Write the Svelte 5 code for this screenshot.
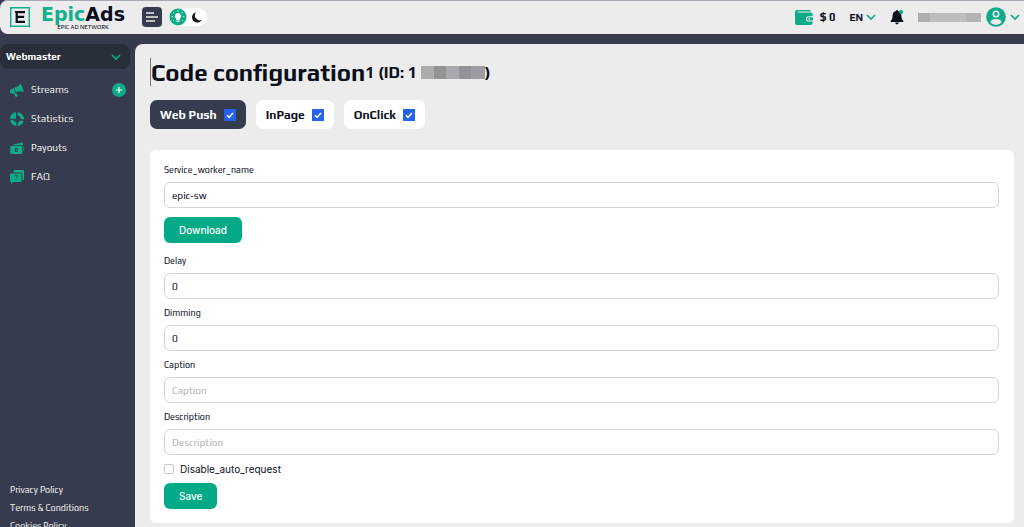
<script lang="ts">
  let sections = $state([
    { id: 'push', title: 'Web Push', enabled: true },
    { id: 'inpage', title: 'InPage', enabled: true },
    { id: 'onclick', title: 'OnClick', enabled: true },
  ]);
  let activeSection = $state('push');

  let worker = $state('epic-sw');
  let disableAuto = $state(false);
  let fields = $state([
    { id: 'delay', label: 'Delay', value: '0', hint: '' },
    { id: 'dimming', label: 'Dimming', value: '0', hint: '' },
    { id: 'caption', label: 'Caption', value: '', hint: 'Caption' },
    { id: 'description', label: 'Description', value: '', hint: 'Description' },
  ]);

  const menu = ['Streams', 'Statistics', 'Payouts', 'FAQ'];
  const legal = ['Privacy Policy', 'Terms & Conditions', 'Cookies Policy'];
</script>

{#snippet chevron()}
  <svg class="chevron" viewBox="0 0 10 8" aria-hidden="true">
    <path d="M1 2l4 4 4-4" />
  </svg>
{/snippet}

<div class="page">
  <header class="topbar">
    <a class="logo" href="#home" aria-label="EpicAds">
      <svg class="logo-mark" viewBox="0 0 20 20" aria-hidden="true">
        <rect x="0.75" y="0.75" width="18.5" height="18.5" fill="none" stroke="#12b08c" stroke-width="1.5" />
        <path d="M4.500 4H15v2.200H7.800v2.600h6.400v2.200H7.800v2.800H15V16H5.600V6.200z" fill="#0b0f1c" />
      </svg>
      <span class="logo-text">
        <span class="logo-name"><em>Epic</em>Ads</span>
        <span class="logo-sub">EPIC AD NETWORK</span>
      </span>
    </a>
    <button class="menu-btn" aria-label="Toggle menu">
      <svg viewBox="0 0 20 20" aria-hidden="true"><path d="M4 6h8M4 10h12M4 14h9" /></svg>
    </button>
    <button class="theme" aria-label="Switch theme">
      <svg viewBox="0 0 38 18" aria-hidden="true">
        <circle cx="9" cy="9" r="8.5" fill="#0dab87" />
        <path d="M9 5a3.2 3.2 0 0 0-1.8 5.8V12h3.6v-1.2A3.2 3.2 0 0 0 9 5zM7.6 12.6h2.8v1.4H7.6z" fill="#fff" />
        <path d="M9 2.2v1.4M4.2 4.2l1 1M13.8 4.2l-1 1M2.6 8.6H4M14 8.6h1.4M4.2 12.8l.9-.8M13.8 12.8l-.9-.8" stroke="#fff" stroke-width="0.9" />
        <path d="M27.2 4.2a5.2 5.2 0 1 0 5.6 7.6 4.8 4.8 0 0 1-5.6-7.6z" fill="#0b0f1c" />
      </svg>
    </button>

    <div class="account">
      <span class="balance">
        <svg class="wallet" viewBox="0 0 18 17" aria-hidden="true">
          <path d="M2 1h12.500A1.500 1.500 0 0 1 16 2.500H2.600v1H16A1.800 1.800 0 0 1 17.600 5v2.200h-4a2.600 2.600 0 0 0 0 5.400h4V14a2 2 0 0 1-1.900 2H2a2 2 0 0 1-2-2V3a2 2 0 0 1 2-2z" />
          <path d="M13.8 8.2h4v3.4h-4a1.7 1.7 0 0 1 0-3.4z" />
          <circle cx="14.2" cy="9.9" r="0.8" fill="#ececec" />
        </svg>
        $ 0
      </span>
      <button class="lang">EN {@render chevron()}</button>
      <button class="bell" aria-label="Notifications">
        <svg viewBox="0 0 14 16" aria-hidden="true">
          <path d="M7 1a1 1 0 0 0-1 1C3.800 2.500 2.600 4.200 2.600 6.500c0 3-.8 4.300-2 5.500v1h12.800v-1c-1.200-1.200-2-2.500-2-5.500C11.400 4.200 10.200 2.500 8 2a1 1 0 0 0-1-1zM5.200 13.600a1.800 1.800 0 0 0 3.600 0z" fill="#0b0f1c" />
          <circle cx="11" cy="3" r="2" fill="#0dab87" />
        </svg>
      </button>
      <span class="email-mask"></span>
      <button class="user" aria-label="Profile">
        <svg class="avatar" viewBox="0 0 20 20" aria-hidden="true">
          <circle cx="10" cy="10" r="9.8" fill="#0dab87" />
          <circle cx="10" cy="7" r="2.700" fill="none" stroke="#ececec" stroke-width="1.600" />
          <path d="M4.200 15.200c.8-2.200 2.800-3.200 5.800-3.200s5 1 5.800 3.200a7.600 7.600 0 0 1-11.600 0z" fill="#ececec" />
        </svg>
        {@render chevron()}
      </button>
    </div>
  </header>

  <div class="body">
    <aside class="sidebar">
      <button class="role">Webmaster {@render chevron()}</button>
      <nav>
        {#each menu as item}
          <div class="nav-row">
            <a class="nav-link" href="#{item.toLowerCase()}">
              <svg viewBox="0 0 14 14" aria-hidden="true">
                {#if item === 'Streams'}
                  <path d="M10.800.3l3 8-1.200.6C10.500 8 8.500 8.200 6.200 9.300L4.400 4.700C7.500 3.900 9.500 2.500 10.800.3zM3.700 5l1.800 4.500-3 1.200L.2 9.800 0 7.200zM3.600 10.700l2.400-1 1.800 3-1.800 1.200z" />
                {:else if item === 'Statistics'}
                  <path d="M6 .2v6.600H0A6.500 6.500 0 0 1 6 .2zM7.600.2A6.800 6.800 0 0 1 13.900 7.500l-3.300-.6a3.400 3.400 0 0 0-3-3.300zM.2 8.200h3.600a3.400 3.400 0 0 0 2.500 2.200v3.500A6.800 6.800 0 0 1 .2 8.200zM7.700 10.400a3.400 3.400 0 0 0 2.600-2l3.300.8a6.800 6.800 0 0 1-5.900 4.700z" />
                {:else if item === 'Payouts'}
                  <path d="M3 3.400l9.500-2L14 9.500l-1 .3V4.200H3zM1 5h10.500a.8.8 0 0 1 .8.800v6.400a.8.8 0 0 1-.8.800H1a.8.8 0 0 1-.8-.8V5.800A.8.8 0 0 1 1 5z" />
                  <ellipse cx="6.300" cy="9" rx="1.600" ry="2.200" fill="#363c4e" />
                  <path d="M5.900 7.700h.8v2.600h-.8z" />
                {:else}
                  <path d="M4.500 0H13a1 1 0 0 1 1 1v8a1 1 0 0 1-1 1h-.6V3.800a1.200 1.200 0 0 0-1.200-1.200H3.500V1a1 1 0 0 1 1-1zM1 3.500h9.500a1 1 0 0 1 1 1V11a1 1 0 0 1-1 1H3.600L1.200 14v-2H1a1 1 0 0 1-1-1V4.500a1 1 0 0 1 1-1z" />
                  <path d="M4.400 6.400c0-1.600 2.800-1.600 2.800 0 0 1-1.400 1-1.400 2.200M5.800 9.500v1" fill="none" stroke="#363c4e" stroke-width="0.9" />
                {/if}
              </svg>
              {item}
            </a>
            {#if item === 'Streams'}
              <button class="add" aria-label="Add stream">
                <svg viewBox="0 0 14 14" aria-hidden="true"><path d="M7 4v6M4 7h6" /></svg>
              </button>
            {/if}
          </div>
        {/each}
      </nav>
      <div class="legal">
        {#each legal as item}
          <a href="#legal">{item}</a>
        {/each}
      </div>
    </aside>

    <main>
      <h1>Code configuration<small>1 (ID: 1<span class="id-mask"></span>)</small></h1>

      <div class="tabs">
        {#each sections as s}
          <div class="tab" class:active={s.id === activeSection}>
            <button onclick={() => (activeSection = s.id)}>{s.title}</button>
            <input type="checkbox" bind:checked={s.enabled} aria-label="Enable {s.title}" />
          </div>
        {/each}
      </div>

      <form class="card" onsubmit={(e) => e.preventDefault()}>
        <div class="field">
          <label for="worker">Service_worker_name</label>
          <input id="worker" type="text" bind:value={worker} />
        </div>
        <button class="btn download" type="button">Download</button>
        {#each fields as f}
          <div class="field">
            <label for={f.id}>{f.label}</label>
            <input id={f.id} type="text" placeholder={f.hint} bind:value={f.value} />
          </div>
        {/each}
        <label class="check">
          <input type="checkbox" bind:checked={disableAuto} />
          Disable_auto_request
        </label>
        <button class="btn" type="submit">Save</button>
      </form>
    </main>
  </div>
</div>

<style>
  :global(body) {
    background: #363c4e;
  }
  .page {
    height: 100vh;
    overflow: hidden;
    background: #363c4e;
    color: #0b0f1c;
    font-family: Play, "Noto Sans", sans-serif;
    font-size: 10px;
  }
  .page :global(*) {
    box-sizing: border-box;
  }
  button {
    padding: 0;
    border: 0;
    background: none;
    color: inherit;
    font: inherit;
    cursor: pointer;
  }
  a {
    color: inherit;
    text-decoration: none;
  }
  svg {
    display: block;
    flex: none;
  }
  .chevron {
    width: 10px;
    height: 8px;
    fill: none;
    stroke: #0dab87;
    stroke-width: 1.6;
  }

  .topbar {
    display: flex;
    align-items: center;
    height: 34px;
    padding: 0 4px 0 10px;
    border-radius: 8px 0 0 8px;
    background: #ececec;
    box-shadow: inset 0 1px #a9a9b4;
  }
  .logo {
    display: flex;
    align-items: center;
    gap: 11px;
    width: 132px;
  }
  .logo-mark {
    width: 20px;
    height: 20px;
  }
  .logo-text {
    display: flex;
    flex-direction: column;
    align-items: center;
  }
  .logo-name {
    font-family: "DejaVu Sans", sans-serif;
    font-size: 19px;
    font-weight: 700;
    line-height: 19px;
  }
  .logo-name em {
    color: #12b08c;
    font-style: normal;
  }
  .logo-sub {
    font-size: 6px;
    line-height: 6px;
  }
  .menu-btn {
    width: 20px;
    height: 20px;
    border-radius: 4px;
    background: #363c4e;
  }
  .menu-btn path {
    fill: none;
    stroke: #ececec;
    stroke-width: 1.4;
  }
  .theme {
    width: 38px;
    height: 18px;
    margin-left: 7px;
    border-radius: 9px;
    background: #fff;
  }
  .account {
    display: flex;
    align-items: center;
    margin-left: auto;
    font-size: 11px;
    font-weight: 700;
  }
  .balance {
    display: flex;
    align-items: center;
    gap: 7px;
  }
  .wallet {
    width: 18px;
    height: 17px;
    fill: #0dab87;
  }
  .lang {
    display: flex;
    align-items: center;
    gap: 3px;
    margin-left: 14px;
    font-size: 10px;
  }
  .bell {
    width: 14px;
    height: 16px;
    margin: 0 14px;
  }
  .email-mask {
    width: 63px;
    height: 9px;
    background: linear-gradient(90deg, #adadad 12px, #bdbdbd 12px 48px, #b3b3b3 48px);
  }
  .user {
    display: flex;
    align-items: center;
    gap: 4px;
    margin-left: 5px;
  }
  .avatar {
    width: 20px;
    height: 20px;
  }

  .body {
    display: flex;
    align-items: flex-start;
    padding-top: 10px;
  }
  .sidebar {
    display: flex;
    flex-direction: column;
    flex: none;
    width: 135px;
    height: 100vh;
    padding-bottom: 36px;
    color: #ececec;
  }
  .role {
    display: flex;
    align-items: center;
    justify-content: space-between;
    width: 130px;
    height: 25px;
    padding: 0 9px 0 6px;
    border-radius: 8px;
    background: #292e3b;
    color: #fff;
    font-weight: 700;
  }
  nav {
    padding-top: 6px;
  }
  .nav-row {
    display: flex;
    align-items: center;
    justify-content: space-between;
    height: 29px;
    padding: 0 9px 0 10px;
  }
  .nav-link {
    display: flex;
    align-items: center;
    gap: 7px;
  }
  .nav-link svg {
    width: 14px;
    height: 14px;
    fill: #0dab87;
  }
  .add {
    width: 14px;
    height: 14px;
    border-radius: 50%;
    background: #0dab87;
  }
  .add path {
    stroke: #fff;
    stroke-width: 1.2;
  }
  .legal {
    display: flex;
    flex-direction: column;
    margin-top: auto;
    padding-left: 10px;
    font-size: 9px;
    line-height: 18px;
  }

  main {
    flex: 1;
    min-width: 0;
    height: 100vh;
    padding: 14px 10px 0 15px;
    border-radius: 8px 0 0 0;
    background: #ececec;
  }
  h1 {
    display: flex;
    align-items: center;
    height: 28px;
    margin: 0;
    border-left: 1px solid #777;
    font-size: 24px;
    font-weight: 700;
    white-space: nowrap;
  }
  h1 small {
    display: flex;
    align-items: center;
    font-size: 16px;
  }
  .id-mask {
    width: 64px;
    height: 13px;
    margin-left: 4px;
    background: linear-gradient(90deg, #acacae 13px, #969298 13px 25px, #a9a9ad 25px 38px, #929398 38px 50px, #9c9ca2 50px);
  }
  .tabs {
    display: flex;
    gap: 10px;
    margin: 14px 0 21px;
  }
  .tab {
    display: flex;
    align-items: center;
    gap: 7px;
    height: 29px;
    padding: 0 10px;
    border-radius: 7px;
    background: #fff;
    font-size: 12px;
    font-weight: 700;
  }
  .tab.active {
    background: #363c4e;
    color: #fff;
  }
  input[type="checkbox"] {
    appearance: none;
    flex: none;
    display: block;
    margin: 0;
  }
  .tab input {
    width: 12px;
    height: 12px;
    background: #fff;
  }
  .tab input:checked,
  .check input:checked {
    background: #2563eb url("data:image/svg+xml,%3Csvg xmlns='http://www.w3.org/2000/svg' viewBox='0 0 12 12'%3E%3Cpath d='M3 6.300l2 2 4-4.300' fill='none' stroke='white' stroke-width='1.600'/%3E%3C/svg%3E") center / 12px 12px no-repeat;
  }

  .card {
    padding: 12px 15px 14px 14px;
    border-radius: 6px;
    background: #fff;
  }
  .field {
    display: flex;
    flex-direction: column;
    gap: 4px;
    margin-bottom: 6px;
  }
  .field label {
    font-size: 9px;
    line-height: 16px;
  }
  .field input {
    width: 100%;
    height: 26px;
    padding: 0 7px;
    border: 1px solid #d4d4d4;
    border-radius: 6px;
    background: #fff;
    color: #0b0f1c;
    font: inherit;
  }
  .field input::placeholder {
    color: #b4b4b4;
  }
  .btn {
    display: block;
    height: 26px;
    padding: 0 15px;
    border-radius: 6px;
    background: #03aa88;
    color: #fff;
    font-family: Inter, sans-serif;
    font-weight: 500;
  }
  .download {
    margin: 9px 0 10px;
  }
  .check {
    display: flex;
    align-items: center;
    gap: 6px;
    height: 16px;
    margin-bottom: 6px;
    font-family: Inter, sans-serif;
  }
  .check input {
    width: 10px;
    height: 10px;
    border: 1px solid #c8c8c8;
    border-radius: 2px;
    background: #fff;
  }
</style>
